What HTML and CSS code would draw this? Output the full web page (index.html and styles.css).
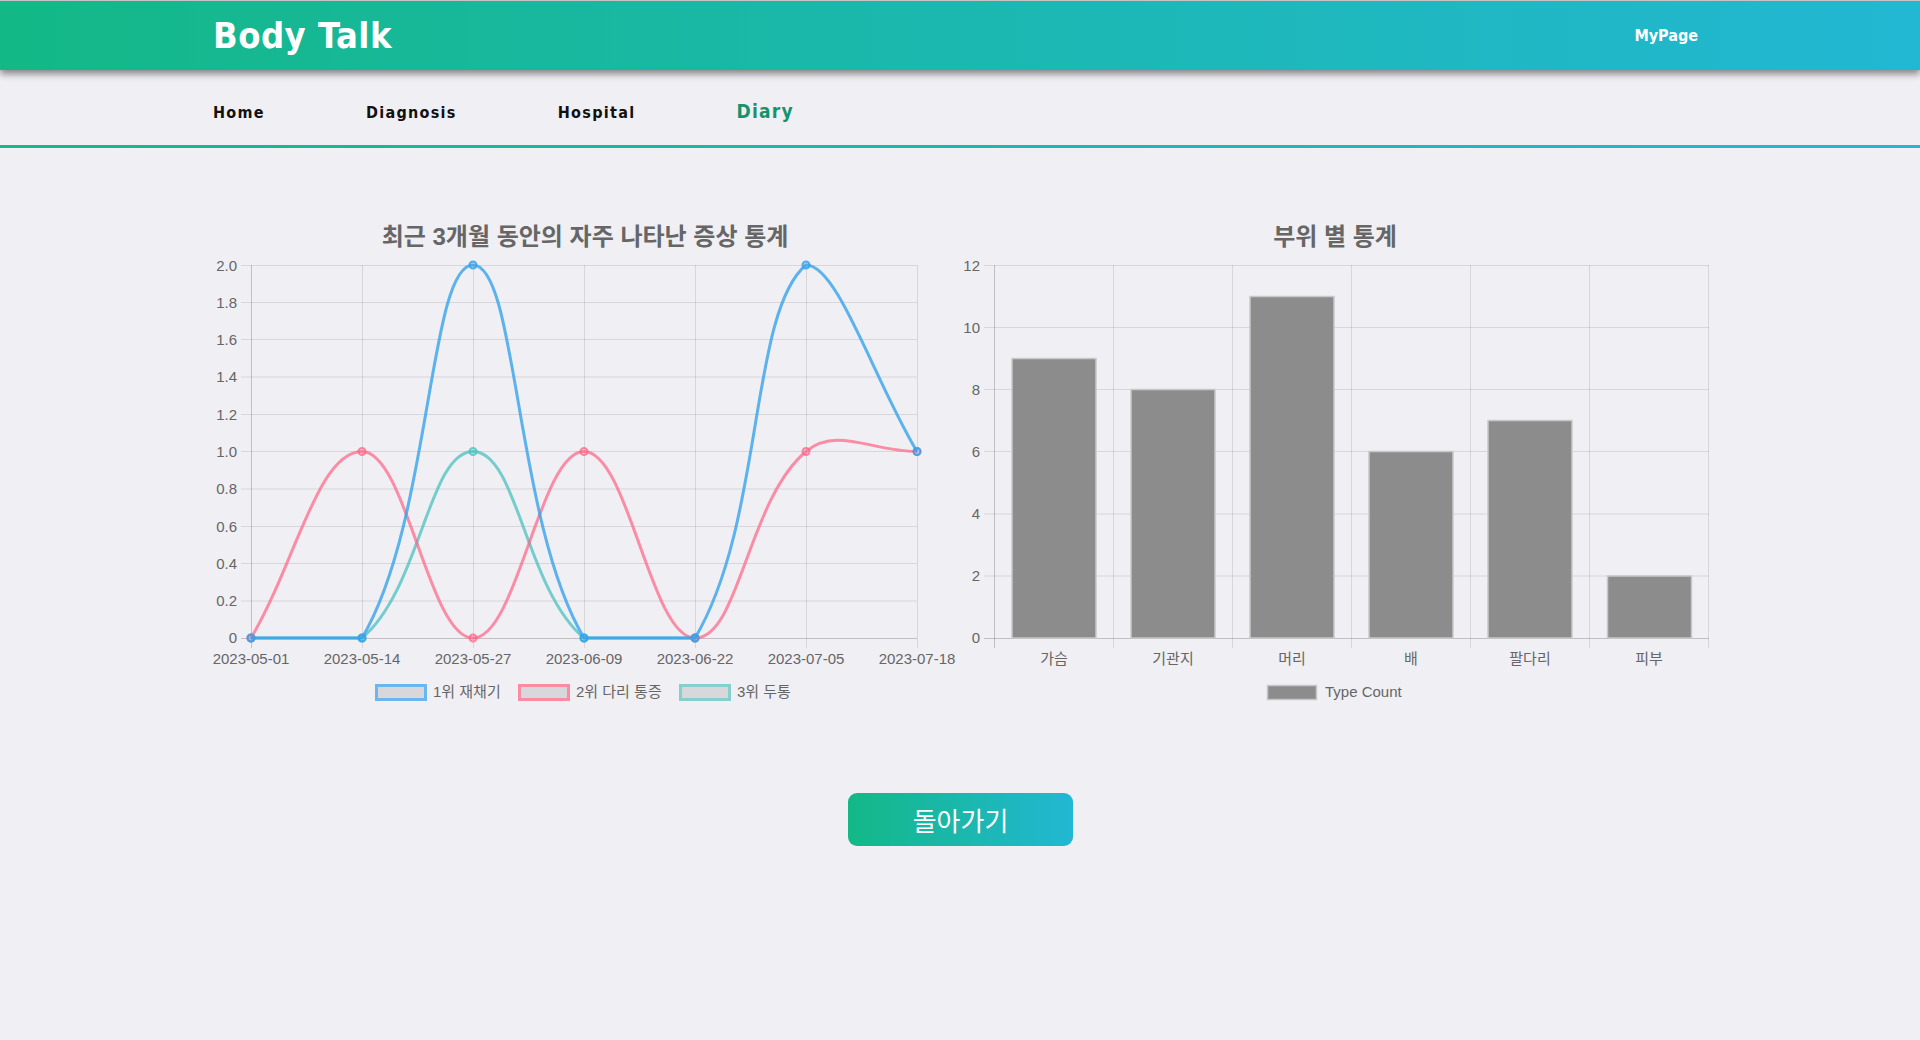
FILE: index.html
```html
<!DOCTYPE html>
<html lang="ko">
<head>
<meta charset="utf-8">
<title>Body Talk - Diary</title>
<link rel="stylesheet" href="styles.css">
</head>
<body>
<header class="topbar">
  <div class="container topbar-inner">
    <a class="brand" href="#">Body Talk</a>
    <a class="mypage" href="#">MyPage</a>
  </div>
</header>
<nav class="mainnav">
  <div class="container nav-inner">
    <a class="nav-link" href="#">Home</a>
    <a class="nav-link" href="#">Diagnosis</a>
    <a class="nav-link" href="#">Hospital</a>
    <a class="nav-link active" href="#">Diary</a>
  </div>
</nav>
<main class="content">
  <section class="container charts">
    <figure class="chart">
      <svg class="chart-svg" width="750" height="500" viewBox="0 0 750 500">
        <text class="chart-title" x="375" y="35" text-anchor="middle">최근 3개월 동안의 자주 나타난 증상 통계</text>
        <g class="grid">
          <line x1="31" y1="391" x2="707" y2="391"/>
          <line x1="31" y1="353.5" x2="707" y2="353.5"/>
          <line x1="31" y1="316.5" x2="707" y2="316.5"/>
          <line x1="31" y1="279" x2="707" y2="279"/>
          <line x1="31" y1="241.5" x2="707" y2="241.5"/>
          <line x1="31" y1="204.5" x2="707" y2="204.5"/>
          <line x1="31" y1="167" x2="707" y2="167"/>
          <line x1="31" y1="129.5" x2="707" y2="129.5"/>
          <line x1="31" y1="92.5" x2="707" y2="92.5"/>
          <line x1="31" y1="55.5" x2="707" y2="55.5"/>
          <line x1="152.5" y1="55" x2="152.5" y2="438"/>
          <line x1="263.5" y1="55" x2="263.5" y2="438"/>
          <line x1="374.5" y1="55" x2="374.5" y2="438"/>
          <line x1="485.5" y1="55" x2="485.5" y2="438"/>
          <line x1="596.5" y1="55" x2="596.5" y2="438"/>
          <line x1="707.5" y1="55" x2="707.5" y2="438"/>
        </g>
        <g class="axis">
          <line x1="31" y1="428.5" x2="707" y2="428.5"/>
          <line x1="41.5" y1="55" x2="41.5" y2="438"/>
        </g>
        <g class="tick" text-anchor="end">
          <text x="27" y="433">0</text>
          <text x="27" y="396">0.2</text>
          <text x="27" y="358.5">0.4</text>
          <text x="27" y="321.5">0.6</text>
          <text x="27" y="284">0.8</text>
          <text x="27" y="246.5">1.0</text>
          <text x="27" y="209.5">1.2</text>
          <text x="27" y="172">1.4</text>
          <text x="27" y="134.5">1.6</text>
          <text x="27" y="97.5">1.8</text>
          <text x="27" y="60.5">2.0</text>
        </g>
        <g class="tick" text-anchor="middle">
          <text x="41" y="454">2023-05-01</text>
          <text x="152" y="454">2023-05-14</text>
          <text x="263" y="454">2023-05-27</text>
          <text x="374" y="454">2023-06-09</text>
          <text x="485" y="454">2023-06-22</text>
          <text x="596" y="454">2023-07-05</text>
          <text x="707" y="454">2023-07-18</text>
        </g>
        <g class="series teal">
          <path d="M41,428 C85.4,428 121.95,428 152,428 C210.75,378.64 218.6,241.5 263,241.5 C307.4,241.5 315.25,378.64 374,428 C404.05,428 440.6,428 485,428"/>
          <circle cx="41" cy="428" r="3.5"/><circle cx="152" cy="428" r="3.5"/><circle cx="263" cy="241.5" r="3.5"/><circle cx="374" cy="428" r="3.5"/><circle cx="485" cy="428" r="3.5"/>
        </g>
        <g class="series pink">
          <path d="M41,428 C85.4,353.4 107.6,241.5 152,241.5 C196.4,241.5 218.6,428 263,428 C307.4,428 329.6,241.5 374,241.5 C418.4,241.5 440.6,428 485,428 C529.4,428 537.25,290.86 596,241.5 C626.05,216.26 662.6,241.5 707,241.5"/>
          <circle cx="41" cy="428" r="3.5"/><circle cx="152" cy="241.5" r="3.5"/><circle cx="263" cy="428" r="3.5"/><circle cx="374" cy="241.5" r="3.5"/><circle cx="485" cy="428" r="3.5"/><circle cx="596" cy="241.5" r="3.5"/><circle cx="707" cy="241.5" r="3.5"/>
        </g>
        <g class="series blue">
          <path d="M41,428 C85.4,428 132.29,428 152,428 C221.09,311.91 218.6,55 263,55 C307.4,55 304.91,311.91 374,428 C393.71,428 465.29,428 485,428 C554.09,311.91 538.99,102.89 596,55 C627.79,55 662.6,166.9 707,241.5"/>
          <circle cx="41" cy="428" r="3.5"/><circle cx="152" cy="428" r="3.5"/><circle cx="263" cy="55" r="3.5"/><circle cx="374" cy="428" r="3.5"/><circle cx="485" cy="428" r="3.5"/><circle cx="596" cy="55" r="3.5"/><circle cx="707" cy="241.5" r="3.5"/>
        </g>
        <g class="legend">
          <rect class="legend-box blue-box" x="166.5" y="475.5" width="49" height="14"/>
          <text class="tick" x="223" y="487">1위 재채기</text>
          <rect class="legend-box pink-box" x="309.5" y="475.5" width="49" height="14"/>
          <text class="tick" x="366" y="487">2위 다리 통증</text>
          <rect class="legend-box teal-box" x="470.5" y="475.5" width="49" height="14"/>
          <text class="tick" x="527" y="487">3위 두통</text>
        </g>
      </svg>
    </figure>
    <figure class="chart">
      <svg class="chart-svg" width="750" height="500" viewBox="0 0 750 500">
        <text class="chart-title" x="375" y="35" text-anchor="middle">부위 별 통계</text>
        <g class="grid">
          <line x1="24" y1="366" x2="749" y2="366"/>
          <line x1="24" y1="304" x2="749" y2="304"/>
          <line x1="24" y1="241.5" x2="749" y2="241.5"/>
          <line x1="24" y1="179.5" x2="749" y2="179.5"/>
          <line x1="24" y1="117.5" x2="749" y2="117.5"/>
          <line x1="24" y1="55.5" x2="749" y2="55.5"/>
          <line x1="153.5" y1="55" x2="153.5" y2="438"/>
          <line x1="272.5" y1="55" x2="272.5" y2="438"/>
          <line x1="391.5" y1="55" x2="391.5" y2="438"/>
          <line x1="510.5" y1="55" x2="510.5" y2="438"/>
          <line x1="629.5" y1="55" x2="629.5" y2="438"/>
          <line x1="748.5" y1="55" x2="748.5" y2="438"/>
        </g>
        <g class="axis">
          <line x1="24" y1="428.5" x2="749" y2="428.5"/>
          <line x1="34.5" y1="55" x2="34.5" y2="438"/>
        </g>
        <g class="tick" text-anchor="end">
          <text x="20" y="433">0</text>
          <text x="20" y="371">2</text>
          <text x="20" y="309">4</text>
          <text x="20" y="246.5">6</text>
          <text x="20" y="184.5">8</text>
          <text x="20" y="122.5">10</text>
          <text x="20" y="60.5">12</text>
        </g>
        <g class="bars">
          <rect x="52" y="148.5" width="84" height="279.5"/>
          <rect x="171" y="179.5" width="84" height="248.5"/>
          <rect x="290" y="86.5" width="84" height="341.5"/>
          <rect x="409" y="241.5" width="84" height="186.5"/>
          <rect x="528" y="210.5" width="84" height="217.5"/>
          <rect x="647.5" y="366" width="84" height="62"/>
        </g>
        <g class="tick" text-anchor="middle">
          <text x="94" y="454">가슴</text>
          <text x="213" y="454">기관지</text>
          <text x="332" y="454">머리</text>
          <text x="451" y="454">배</text>
          <text x="570" y="454">팔다리</text>
          <text x="689" y="454">피부</text>
        </g>
        <g class="legend">
          <rect class="legend-box gray-box" x="307.5" y="475.5" width="49" height="14"/>
          <text class="tick" x="365" y="487">Type Count</text>
        </g>
      </svg>
    </figure>
  </section>
  <div class="actions">
    <button class="back-btn" type="button">돌아가기</button>
  </div>
</main>
</body>
</html>
```
FILE: styles.css
```css
html, body {
  margin: 0;
  padding: 0;
}
body {
  background: #f0eff4;
  font-family: "Liberation Sans", "Noto Sans CJK KR", sans-serif;
  color: #333;
}
a {
  text-decoration: none;
}
.container {
  width: 1500px;
  margin: 0 auto;
  box-sizing: border-box;
}
.topbar {
  height: 70px;
  box-sizing: border-box;
  border-top: 1px solid #c4c4c4;
  background: linear-gradient(90deg, #13b886 0%, #1bb8b0 50%, #22b7d3 100%);
  box-shadow: 0 4px 7px rgba(0, 0, 0, 0.45);
  position: relative;
  z-index: 2;
}
.topbar-inner {
  height: 100%;
  display: flex;
  align-items: center;
  justify-content: space-between;
  padding: 0 12px 0 3px;
}
.brand {
  font-family: "DejaVu Sans Condensed", "DejaVu Sans", sans-serif;
  font-weight: bold;
  font-size: 36px;
  color: #ffffff;
  letter-spacing: 0.5px;
}
.mypage {
  font-family: "DejaVu Sans Condensed", "DejaVu Sans", sans-serif;
  font-weight: bold;
  font-size: 16px;
  color: #ffffff;
}
.mainnav {
  height: 78px;
  box-sizing: border-box;
  border-bottom: 3px solid #1ab8a8;
  border-image: linear-gradient(90deg, #14b88a, #22b7d3) 1;
}
.nav-inner {
  display: flex;
  align-items: baseline;
  gap: 101px;
  padding: 31px 0 0 3px;
  line-height: 20px;
}
.nav-link {
  font-family: "DejaVu Sans Condensed", "DejaVu Sans", sans-serif;
  font-weight: bold;
  font-size: 16px;
  letter-spacing: 1.3px;
  color: #111111;
}
.nav-link.active {
  font-size: 19px;
  color: #14946c;
}
.content {
  padding-top: 62px;
}
.charts {
  display: flex;
}
.chart {
  margin: 0;
  width: 750px;
  height: 500px;
}
.chart-svg {
  display: block;
}
.chart-title {
  font-family: "Liberation Sans", "Noto Sans CJK KR", sans-serif;
  font-weight: bold;
  font-size: 24px;
  fill: #666666;
}
.tick {
  font-family: "Liberation Sans", "Noto Sans CJK KR", sans-serif;
  font-size: 15px;
  fill: #666666;
}
.grid line {
  stroke: rgba(0, 0, 0, 0.1);
  stroke-width: 1;
}
.axis line {
  stroke: rgba(0, 0, 0, 0.2);
  stroke-width: 1;
}
.series path {
  fill: none;
  stroke-width: 3;
}
.series circle {
  stroke-width: 2;
}
.series.blue path { stroke: rgba(54, 162, 235, 0.8); }
.series.blue circle { stroke: rgba(54, 162, 235, 0.85); fill: rgba(54, 162, 235, 0.3); }
.series.pink path { stroke: rgba(255, 99, 132, 0.7); }
.series.pink circle { stroke: rgba(255, 99, 132, 0.75); fill: rgba(255, 99, 132, 0.2); }
.series.teal path { stroke: rgba(75, 192, 192, 0.75); }
.series.teal circle { stroke: rgba(75, 192, 192, 0.8); fill: rgba(75, 192, 192, 0.2); }
.legend-box {
  fill: #d8d7dc;
  stroke-width: 3;
}
.blue-box { stroke: #6bb6ee; }
.pink-box { stroke: #f98ba3; }
.teal-box { stroke: #87cfcf; }
.gray-box {
  fill: #8c8c8c;
  stroke: #c6c6c6;
  stroke-width: 1.5;
}
.bars rect {
  fill: #8c8c8c;
  stroke: #c8c8c8;
  stroke-width: 1.5;
}
.actions {
  display: flex;
  justify-content: center;
  padding-top: 83px;
}
.back-btn {
  width: 225px;
  height: 53px;
  border: none;
  border-radius: 9px;
  background: linear-gradient(90deg, #13b886, #22b7d3);
  color: #ffffff;
  font-family: "Noto Sans CJK KR", "Liberation Sans", sans-serif;
  font-size: 26px;
  padding: 0;
  margin-left: 1px;
  cursor: pointer;
}
```
